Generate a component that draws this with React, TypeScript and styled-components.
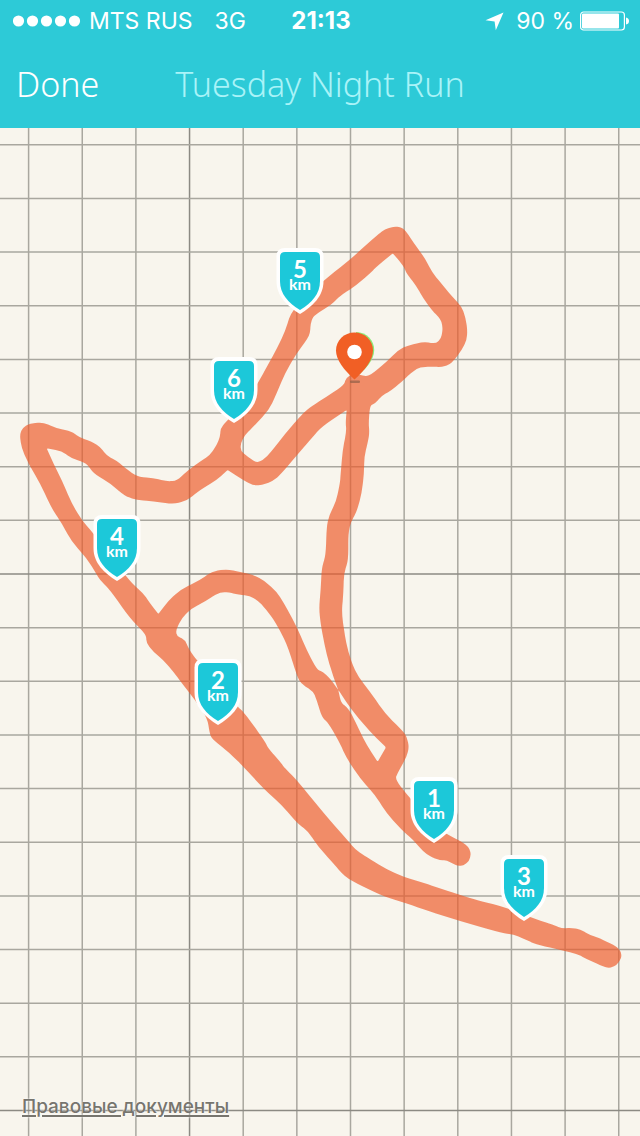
import React from "react";
import styled, { createGlobalStyle } from "styled-components";

const GlobalStyle = createGlobalStyle`
  *, *::before, *::after { box-sizing: border-box; }
  body {
    margin: 0;
    background: #f8f5ed;
    font-family: "Noto Sans", "Open Sans", sans-serif;
  }
`;

const Screen = styled.div`
  display: flex;
  flex-direction: column;
`;

const Header = styled.header`
  background: #2dcad7;
  color: #fff;
`;

const StatusBar = styled.div`
  display: grid;
  grid-template-columns: 1fr auto 1fr;
  align-items: center;
  height: 40px;
  padding: 2px 11px 0 13px;
  font-family: Inter, "Liberation Sans", sans-serif;
  font-size: 23px;
  line-height: 38px;
  white-space: nowrap;
`;

const StatusGroup = styled.div<{ $end?: boolean }>`
  display: flex;
  align-items: center;
  justify-content: ${(p) => (p.$end ? "flex-end" : "flex-start")};
  gap: ${(p) => (p.$end ? "6px" : "8px")};
`;

const Network = styled.span`
  margin-left: 14px;
`;

const Percent = styled.span`
  margin-left: 6px;
`;

const Clock = styled.time`
  font-size: 24px;
  font-weight: 700;
`;

const NavBar = styled.nav`
  display: grid;
  grid-template-columns: 1fr auto 1fr;
  align-items: center;
  height: 88px;
  padding: 0 16px;
`;

const NavButton = styled.button`
  justify-self: start;
  padding: 0;
  border: 0;
  background: none;
  color: #fff;
  font: inherit;
  font-size: 34px;
  font-weight: 300;
  line-height: 44px;
  cursor: pointer;
`;

const Title = styled.h1`
  margin: 0;
  color: #a9f3f8;
  font-size: 34px;
  font-weight: 300;
  line-height: 44px;
`;

const MapArea = styled.main`
  position: relative;
  width: 100%;
  aspect-ratio: 640 / 1008;
  overflow: hidden;
`;

const MapDrawing = styled.svg`
  display: block;
  width: 100%;
  height: 100%;
`;

const Marker = styled.div<{ $x: number; $y: number }>`
  position: absolute;
  left: ${(p) => (p.$x / 640) * 100}%;
  top: ${(p) => ((p.$y - 128) / 1008) * 100}%;
  transform: translate(-50%, -100%);
`;

const Badge = styled(Marker)`
  width: 48px;
  height: 68px;
  padding-top: 10px;
  color: #fff;
  font-family: Lato, "Open Sans", sans-serif;
  font-weight: 700;
  text-align: center;
`;

const BadgeShape = styled.svg`
  position: absolute;
  inset: 0;
`;

const BadgeNumber = styled.div`
  position: relative;
  font-size: 24px;
  line-height: 24px;
`;

const BadgeUnit = styled.div`
  position: relative;
  font-size: 16px;
  line-height: 6px;
`;

const LegalLink = styled.a`
  position: absolute;
  left: 22px;
  bottom: 18px;
  color: #77756e;
  font-family: Inter, "Liberation Sans", sans-serif;
  font-size: 19px;
  font-weight: 500;
  line-height: 22px;
  text-decoration-thickness: 2px;
  text-underline-offset: 2px;
  text-shadow: 0 0 2px #fff;
`;

const GRID_STEP = 53.65;
const columns = Array.from({ length: 12 }, (_, i) => 28.6 + i * GRID_STEP);
const rows = Array.from({ length: 19 }, (_, i) => 144.8 + i * GRID_STEP);

const OUTLINE =
  "323 281L352 258L363.3 247.3L377.3 235L385 229.3L393.3 226.7L400 226.7L405.7 230.7L413.3 242.3L425 258.3L431.7 271.7L443.3 286L451.7 296L461.7 306.7L465.7 318.3L467.3 330L466.7 340L461.7 350L455 359L450 364.3L441.7 367L433.3 366.7L420 367L411.7 372.3L401.7 381.7L391.7 390L381.7 396L375 403.3L370 405.7" +
  "L368.7 421.7L369.3 433.3L368.3 440L364.3 456.7L364 473.3L361.7 493.3L356.7 511.7L351 521.7L348.3 533.3L348.3 560L344 573.3L343.3 593.3L341.7 613.3L345 636.7L348.3 651.7L352.7 665L358.3 676.7L370 691.7L385 713.3L403.3 731.7L406.7 736.7L409 746.7L406.7 756.7L398.3 771.7L395 779.3L410 798.3L440 830" +
  "L451.7 836.7L461.7 841.7L468.3 846.7L471 853.3L469.3 860.7L463.3 865.7L456.7 865.7L446.7 860.3L440 860.3L431.7 857.3L423.3 851.7L413.3 840L401.7 830L386.7 813.3L375 795L360 778.3L346.7 758.3L338.3 740L328.5 723.5L321.7 716.7L316.7 700L313.3 691.7L300.7 683.3L296.7 675L286.7 643.3L275 621.7L266.7 610L258.3 601L250 596L236.7 594.3L228.3 592L218.3 592.7L205 601.7L191.7 608.3L181.7 618.3L176 630L176.7 635.7L185 640L189.3 650L196.7 660" +
  "L238.3 707.3L243.3 711.7L253.3 725L265 741.7L268.3 748.3L280 761.7L285 768.3L296.7 780L326.7 816.7L346.7 839.3L355 849.3L366.7 857.3L386.7 869.3L403.3 876.7L420 881.7L440 888.3L460 895L476.7 900L503.3 906.7L533.3 918.3L553.3 925L561.7 928.3L572 928L580 929.3L590 935L600 938.3L616.7 946.7L621 951.7L621.5 958L616.7 965L610 968L603.3 966.7L586.7 959L576.7 953.7L560 950L535 944L526.7 940L513 934.3L503.3 933.3L460 921L420 908.3L406.7 903.3L386.7 897.3L370 890L350 880L341.7 873.3L333.3 863.3L318.3 846.7L308.3 831.7L296.7 822.7L281.7 805L265 790L243.3 766.7L230 753.3L213.3 740L210 735L207.3 718.3" +
  "L195 700L183.3 685L173.3 671.7L163.3 660L153.3 651.7L146.5 643L146 634.3L130 618.3L110 590L100 580L95 571.7L86.7 558.3L71.7 541.7L61.7 523.3L51.7 508.3L40 483.3L28.3 463.3L21.7 448.3L19.7 435L22.7 427.7L30 423.3L43.3 422.3L55 427.7L71.7 431.7L80 437.7L91.7 441.7L100 446.7L106.7 455.7L116.7 460.7L125 467.7L136.7 476.7L153 478L166.7 481.3L176.7 480.7L188.3 470L200 461.7L210 455L216.7 445L220 436.7L220.7 428.3L226 421.7L243 405L258 383L270 361L276.7 349L285 331.7L291.7 310";

const UPPER_OPENING =
  "313.3 316L331.7 304.3L340 296L356.7 285L370 273.3L376.7 266.7L392.7 253.3L400 261.7L404 267.3L406.7 273.3L416.7 286.7L423.3 298.3L431.7 310L438.3 316.7L441.7 321.7L442.7 330L441 338.3L436 343.7L423.3 341.7L406.7 346L398.3 350L386.7 361.7L370 375.7L363.3 376L354 373L346 378L344 385L326.7 396.7L308.3 408.3L300 416.7L285 434L270 453.3L263 460L256.7 462.7L248 457L240.7 450.7L240.7 443.3L245 435L253 427L269 410L276.7 393.3L285 373.3L296.7 353.3L306.7 340L310 333.3L310.7 323.3";

const CENTRE_OPENING =
  "346.7 410L345.7 421.7L346.3 431.7L342.7 450L340.7 473.3L340 483L336 501.7L329.3 515L326.7 526.7L325.7 555L321.7 568.3L320.7 590L319 608.3L321 626.7L326.7 655L333.3 676.7L338.3 690L330 678.3L323.3 672.3L316.7 669.3L306.7 650L296.7 626.7L285 605L276.7 591.7L263.3 580L253.3 575L243.3 572.7L226.7 569L211.7 571.7L200 580L180 590L168.3 601L158.3 614L150 603.3L143.3 593.3L130 581.7L93.3 533.3L81.7 520L71.7 503.3L61.7 480L53.3 463.3L46.7 448.3L61.7 451L71.7 458.3L86.7 463.3L93.3 473.3L110 483.3L125 496L136.7 500L153.3 501.3L173.3 504L186.7 500.7L200 490L216.7 480L227.7 470L241.7 479.3L253.3 485.3L261.7 485.3L273 481L280 475L300 451.7L310 440L321.7 426.7";

const LOWER_OPENING =
  "338.3 690L351.7 710L370 731.7L386 747.3L377.7 761.7L366.7 745L358.3 728.3L351.7 714L346.7 707L341 702.7";

type Point = [number, number];

const toward = ([ax, ay]: Point, [bx, by]: Point, t: number) =>
  `${(ax + (bx - ax) * t).toFixed(1)} ${(ay + (by - ay) * t).toFixed(1)}`;

const turnAt = (a: Point, b: Point, c: Point) => {
  const turn = Math.abs(Math.atan2(c[1] - b[1], c[0] - b[0]) - Math.atan2(b[1] - a[1], b[0] - a[0]));
  return Math.min(turn, 2 * Math.PI - turn);
};

// Closes the ring, rounds its gentle bends and keeps its sharp corners.
const smoothRing = (ring: string) => {
  const points = ring.split("L").map((p) => p.split(" ").map(Number) as Point);
  const n = points.length;
  return (
    points
      .map((p, i) => {
        const before = points[(i + n - 1) % n];
        const after = points[(i + 1) % n];
        const reach = turnAt(before, p, after) > 1.1 ? 0.08 : 0.4;
        return `${i ? "L" : "M"}${toward(p, before, reach)}Q${p[0]} ${p[1]} ${toward(p, after, reach)}`;
      })
      .join("") + "Z"
  );
};

const ROUTE = [OUTLINE, UPPER_OPENING, CENTRE_OPENING, LOWER_OPENING].map(smoothRing).join("");

const badges = [
  { km: 1, x: 434, y: 844 },
  { km: 2, x: 218, y: 726 },
  { km: 3, x: 524, y: 922 },
  { km: 4, x: 117, y: 582 },
  { km: 5, x: 300, y: 315 },
  { km: 6, x: 234, y: 424 },
];

const SignalDots = () => (
  <svg width="68" height="12" viewBox="0 0 68 12" fill="#fff" aria-hidden="true">
    {[5.5, 19.5, 33.5, 47.5, 61.5].map((x) => (
      <circle key={x} cx={x} cy="6" r="5.6" />
    ))}
  </svg>
);

const LocationArrow = () => (
  <svg width="19" height="19" viewBox="0 0 19 19" aria-hidden="true">
    <path d="M18.5 0.5L0.5 8.2L9.6 9.4L10.8 18.3Z" fill="#fff" />
  </svg>
);

const Battery = () => (
  <svg width="49" height="20" viewBox="0 0 49 20" aria-hidden="true">
    <rect x="0.6" y="1" width="43.8" height="18" rx="3" fill="none" stroke="#fff" strokeWidth="1.2" />
    <rect x="2" y="2.6" width="37" height="14.8" rx="1" fill="#fff" />
    <path d="M46 6.5Q49 7 49 10Q49 13 46 13.5Z" fill="#fff" />
  </svg>
);

const KilometreBadge = ({ km, x, y }: { km: number; x: number; y: number }) => (
  <Badge $x={x} $y={y}>
    <BadgeShape width="48" height="68" viewBox="0 0 48 68" aria-hidden="true">
      <path
        d="M9 1H39Q47.5 1 47.5 9.5V34C47.5 49 37 59 24 67C11 59 0.5 49 0.5 34V9.5Q0.5 1 9 1Z"
        fill="#fff"
      />
      <path d="M9 5H39Q44 5 44 10V34C44 47 36 55.5 24 63C12 55.5 4 47 4 34V10Q4 5 9 5Z" fill="#1cc8d9" />
    </BadgeShape>
    <BadgeNumber>{km}</BadgeNumber>
    <BadgeUnit>km</BadgeUnit>
  </Badge>
);

const StartPin = () => (
  <Marker $x={355} $y={384}>
    <svg width="40" height="54" viewBox="0 0 40 54" role="img" aria-label="Start" display="block">
      <path d="M21 2C32 2 39.2 10.5 39.2 20C39.2 30 31 39 21 47Z" fill="#8bea77" />
      <rect x="15" y="50.5" width="10" height="2.5" rx="1" fill="#8b5a44" opacity="0.65" />
      <path d="M19.5 2.5C30 2.5 38 10.5 38 20.5C38 30 30 40 19.5 49.5C9 40 1 30 1 20.5C1 10.5 9 2.5 19.5 2.5Z" fill="#f15f25" />
      <circle cx="19.5" cy="22" r="7.3" fill="#fff" />
    </svg>
  </Marker>
);

export default function App() {
  return (
    <Screen>
      <GlobalStyle />
      <Header>
        <StatusBar>
          <StatusGroup>
            <SignalDots />
            <span>MTS RUS</span>
            <Network>3G</Network>
          </StatusGroup>
          <Clock>21:13</Clock>
          <StatusGroup $end>
            <LocationArrow />
            <Percent>90 %</Percent>
            <Battery />
          </StatusGroup>
        </StatusBar>
        <NavBar>
          <NavButton type="button">Done</NavButton>
          <Title>Tuesday Night Run</Title>
        </NavBar>
      </Header>
      <MapArea>
        <MapDrawing viewBox="0 128 640 1008" role="img" aria-label="Route map">
          <g stroke="#a9a79f" strokeWidth="1.5">
            {columns.map((x, i) => (
              <line key={x} x1={x} x2={x} y1="128" y2="1136" stroke={i === 3 ? "#8c8a83" : undefined} />
            ))}
            {rows.map((y, i) => (
              <line key={y} x1="0" x2="640" y1={y} y2={y} stroke={i === 8 || i === 18 ? "#8c8a83" : undefined} />
            ))}
          </g>
          <path d={ROUTE} fill="#ee5a2a" fillRule="evenodd" opacity="0.68" />
        </MapDrawing>
        {badges.map((b) => (
          <KilometreBadge key={b.km} {...b} />
        ))}
        <StartPin />
        <LegalLink href="#legal">Правовые документы</LegalLink>
      </MapArea>
    </Screen>
  );
}
